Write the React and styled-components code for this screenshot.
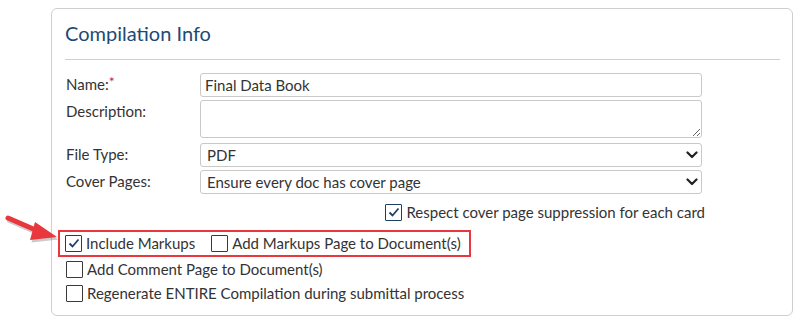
// react
import React from 'react'

// styled
import styled, { createGlobalStyle } from 'styled-components'

const GlobalStyle = createGlobalStyle`
	html, body {
		margin: 0;
		padding: 0;
		background: #fff;
	}
	body {
		font-family: Lato, "Open Sans", "Liberation Sans", sans-serif;
		color: #333;
	}
`

const fields = [
	{ label: 'Name:', required: true, kind: 'input', value: 'Final Data Book' },
	{ label: 'Description:', kind: 'textarea', value: '' },
	{ label: 'File Type:', kind: 'select', value: 'PDF' },
	{ label: 'Cover Pages:', kind: 'select', value: 'Ensure every doc has cover page' },
]

const Chevron = () => (
	<svg width='12' height='8' viewBox='0 0 12 8'>
		<path d='M1.5 1.5 L6 6 L10.5 1.5' fill='none' stroke='#222' strokeWidth='2.2' strokeLinecap='round' strokeLinejoin='round'/>
	</svg>
)

const Check = ({ checked }) => (
	<Box checked={checked}>
		{checked && (
			<svg width='12' height='10' viewBox='0 0 12 10'>
				<path d='M1.5 5.5 L4.5 8.5 L10.5 1.5' fill='none' stroke='#1d3f66' strokeWidth='1.8'/>
			</svg>
		)}
	</Box>
)

// red call-out arrow pointing at the highlighted row
const Arrow = () => (
	<ArrowSvg width='62' height='42' viewBox='0 0 62 42'>
		<g transform='translate(1.5,2.5)' opacity='0.3'>
			<path d='M8 6 L38 19' stroke='#555' strokeWidth='5' strokeLinecap='round'/>
			<path d='M35 10 L57 25 L30 28 Z' fill='#555'/>
		</g>
		<path d='M8 6 L38 19' stroke='#e8383d' strokeWidth='5' strokeLinecap='round'/>
		<path d='M35 10 L57 25 L30 28 Z' fill='#e8383d'/>
	</ArrowSvg>
)

const App = () => (
	<Page>
		<GlobalStyle/>
		<Arrow/>
		<Card>
			<Title>Compilation Info</Title>
			<Divider/>
			<Form>
				{fields.map(field => (
					<React.Fragment key={field.label}>
						<Label>
							{field.label}
							{field.required && <Star>*</Star>}
						</Label>
						{field.kind === 'input' && <Input readOnly value={field.value}/>}
						{field.kind === 'textarea' && <TextArea readOnly value={field.value}/>}
						{field.kind === 'select' && (
							<Select>
								<span>{field.value}</span>
								<Chevron/>
							</Select>
						)}
					</React.Fragment>
				))}
			</Form>
			<RespectRow>
				<CheckItem>
					<Check checked/>
					Respect cover page suppression for each card
				</CheckItem>
			</RespectRow>
			<Highlight>
				<CheckItem>
					<Check checked/>
					Include Markups
				</CheckItem>
				<CheckItem>
					<Check/>
					Add Markups Page to Document(s)
				</CheckItem>
			</Highlight>
			<Options>
				<CheckItem>
					<Check/>
					Add Comment Page to Document(s)
				</CheckItem>
				<CheckItem>
					<Check/>
					Regenerate ENTIRE Compilation during submittal process
				</CheckItem>
			</Options>
		</Card>
	</Page>
)

export default App

const Page = styled.div`
	position: relative;
	width: 801px;
	height: 326px;
	padding: 8px 0 0 51px;
	box-sizing: border-box;
`

const ArrowSvg = styled.svg`
	position: absolute;
	left: 0;
	top: 212px;
`

const Card = styled.div`
	width: 742px;
	height: 308px;
	box-sizing: border-box;
	border: 1px solid #cfcfcf;
	border-radius: 6px;
	padding: 12px 12px 0 13px;
`

const Title = styled.h2`
	margin: 0;
	font-size: 20px;
	font-weight: 400;
	line-height: 24px;
	color: #1c4a75;
`

const Divider = styled.div`
	height: 1px;
	background: #cfcfcf;
	margin: 14px 0 13px;
`

const Form = styled.div`
	display: grid;
	grid-template-columns: 135px 502px;
	row-gap: 3px;
	align-items: start;
`

const Label = styled.div`
	font-size: 15px;
	line-height: 18px;
	padding: 2px 0 0 1px;
	color: #333;
`

const Star = styled.span`
	color: #c8283a;
	font-size: 14px;
	vertical-align: top;
	position: relative;
	top: -2px;
`

const fieldBase = `
	box-sizing: border-box;
	width: 100%;
	border: 1px solid #c9c9c9;
	border-radius: 3px;
	background: #fff;
	font-family: Lato, "Open Sans", "Liberation Sans", sans-serif;
	font-size: 15px;
	color: #333;
	outline: none;
	margin: 0;
`

const Input = styled.input`
	${fieldBase};
	height: 24px;
	padding: 0 4px;
`

const TextArea = styled.textarea`
	${fieldBase};
	display: block;
	height: 38px;
	resize: both;
	margin-bottom: 2px;
`

const Select = styled.div`
	${fieldBase};
	height: 24px;
	padding: 0 3px 0 6px;
	display: flex;
	align-items: center;
	justify-content: space-between;
`

const RespectRow = styled.div`
	width: 640px;
	display: flex;
	justify-content: flex-end;
	margin-top: 9px;
`

const CheckItem = styled.label`
	display: flex;
	align-items: center;
	gap: 4px;
	font-size: 15px;
	line-height: 18px;
	color: #333;
`

const Box = styled.span`
	width: 17px;
	height: 17px;
	box-sizing: border-box;
	border: 1px solid ${props => props.checked ? '#1d3f66' : '#3a3a3a'};
	border-radius: 1px;
	background: #fff;
	display: flex;
	align-items: center;
	justify-content: center;
`

const Highlight = styled.div`
	display: inline-flex;
	gap: 16px;
	margin: 9px 0 0 -7px;
	padding: 2px 8px 3px 5px;
	border: 2px solid #e8383d;
`

const Options = styled.div`
	display: flex;
	flex-direction: column;
	gap: 6px;
	margin-top: 3px;
	padding-left: 1px;
`
